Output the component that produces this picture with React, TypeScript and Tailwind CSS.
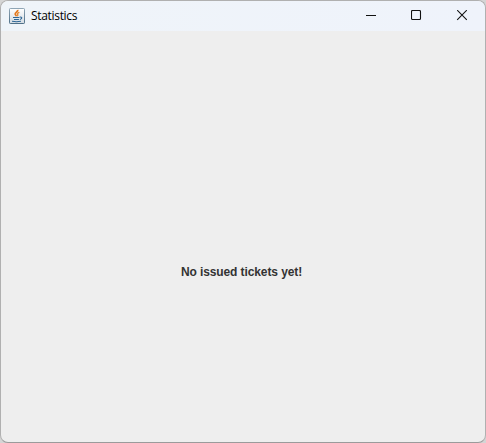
function JavaIcon() {
  return (
    <svg width="16" height="16" viewBox="0 0 16 16" className="shrink-0">
      <defs>
        <linearGradient id="tile" x1="0" y1="0" x2="0" y2="1">
          <stop offset="0" stopColor="#ffffff" />
          <stop offset="1" stopColor="#d3dbe2" />
        </linearGradient>
        <linearGradient id="edge" x1="0" y1="0" x2="0" y2="1">
          <stop offset="0" stopColor="#8fa5b5" />
          <stop offset="1" stopColor="#4f7088" />
        </linearGradient>
      </defs>
      <rect x="0.5" y="0.5" width="15" height="15" rx="0.7" fill="url(#tile)" stroke="url(#edge)" />
      <path d="M8.8 1.8C9.2 3.8 5.8 4.3 6.2 6.1C6.4 7 7.2 7.3 7.5 8.2" fill="none" stroke="#e5781d" strokeWidth="1.7" />
      <path d="M10.4 4.3C8.3 5 7.9 5.7 8.7 6.5C9.1 7.1 8.9 7.6 8.3 8.1" fill="none" stroke="#e58a35" strokeWidth="1.4" />
      <path d="M4 9.5H10.3M5 11.5H9.9M3 13.3C5.5 13.8 9.5 13.8 12 13.3" fill="none" stroke="#2f6796" strokeWidth="1.1" />
      <path d="M10.7 9.2C13.4 8.5 13.5 10.7 10.9 11.5" fill="none" stroke="#2f6796" strokeWidth="1.1" />
    </svg>
  );
}

function WindowControls() {
  return (
    <div className="ml-auto flex h-full text-[#111111]">
      <button aria-label="Minimize" className="flex w-[46px] items-center justify-center">
        <svg width="12" height="12" viewBox="0 0 12 12">
          <path d="M1 5.5H11" stroke="currentColor" />
        </svg>
      </button>
      <button aria-label="Maximize" className="flex w-[45px] items-center justify-center">
        <svg width="11" height="12" viewBox="0 0 11 12">
          <rect x="0.5" y="0.5" width="9" height="9" rx="1" fill="none" stroke="currentColor" strokeWidth="1.1" />
        </svg>
      </button>
      <button aria-label="Close" className="flex w-[46px] items-center justify-center">
        <svg width="12" height="12" viewBox="0 0 12 12">
          <path d="M1.2 0.2L10.8 9.8M10.8 0.2L1.2 9.8" stroke="currentColor" strokeWidth="1.1" />
        </svg>
      </button>
    </div>
  );
}

export default function App() {
  return (
    <div className="h-[443px] w-[486px] bg-[#d5d5d5]">
      <main className="flex h-full w-full flex-col overflow-hidden rounded-lg border border-[#b0b0b0] border-b-[#9b9b9b] bg-[#eeeeee]">
        <header className="flex h-[30px] shrink-0 items-center bg-gradient-to-r from-[#eff4f9] to-[#eff3fb] pl-2">
          <JavaIcon />
          <h1 className="ml-[6px] font-['Open_Sans','Noto_Sans',sans-serif] text-[12px] leading-4 tracking-[-0.32px] text-black">
            Statistics
          </h1>
          <WindowControls />
        </header>
        <section className="flex flex-1 items-start justify-center pt-[233px] pr-[3px]">
          <p className="font-['Liberation_Sans',Arial,sans-serif] text-[12px] font-bold leading-4 tracking-[-0.1px] text-[#333333]">
            No issued tickets yet!
          </p>
        </section>
      </main>
    </div>
  );
}
